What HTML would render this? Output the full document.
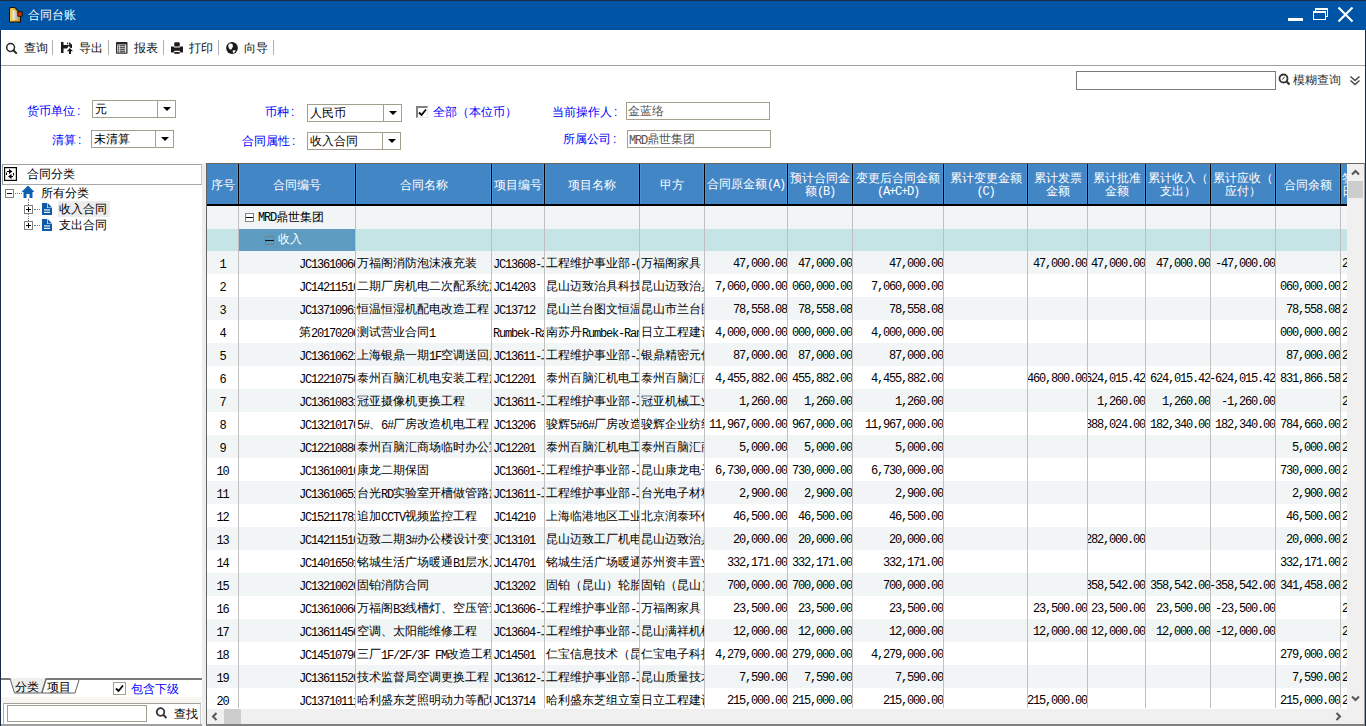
<!DOCTYPE html><html><head><meta charset='utf-8'><style>
*{margin:0;padding:0;box-sizing:border-box}
html,body{width:1366px;height:726px;overflow:hidden;background:#fff;font-family:'Liberation Sans',sans-serif;font-size:12px;color:#000}
.ab{position:absolute}
.t{position:absolute;white-space:nowrap;line-height:14px;font-size:12px}
.m{font-family:'Liberation Mono',monospace;letter-spacing:-1.2px}
.lbl{color:#0000ff}
.combo{position:absolute;border:1px solid #a49e8c;background:#fff}
.combo .dv{position:absolute;top:0;bottom:0;width:1px;background:#a49e8c}
.arr{position:absolute;width:0;height:0;border-left:4px solid transparent;border-right:4px solid transparent;border-top:4px solid #000}
.hd{position:absolute;top:164px;height:40px;padding-top:2px;background:#4386c6;color:#fff;display:flex;align-items:center;justify-content:center;text-align:center;line-height:13px;overflow:hidden;white-space:nowrap}
.cell{position:absolute;height:23px;overflow:hidden;white-space:nowrap;line-height:23px}
</style></head><body>
<div class='ab' style='left:0;top:0;width:1366px;height:1px;background:#1b2b44'></div>
<div class='ab' style='left:0;top:1px;width:1366px;height:29px;background:#0054a5'></div>
<div class='ab' style='left:0;top:30px;width:1px;height:696px;background:#1b2b44'></div>
<div class='ab' style='left:1365px;top:30px;width:1px;height:696px;background:#1b2b44'></div>
<svg class='ab' style='left:8px;top:6px' width='16' height='18' viewBox='0 0 16 18'>
<defs><linearGradient id='gy' x1='0' x2='1'><stop offset='0' stop-color='#f8d048'/><stop offset='1' stop-color='#c89010'/></linearGradient>
<linearGradient id='gp' x1='0' x2='1'><stop offset='0' stop-color='#f4f2ea'/><stop offset='1' stop-color='#a8a498'/></linearGradient></defs>
<path d='M1 3 Q1 1 3 1 H7 L13 7.5 V16.5 H1 Z' fill='#1a1200'/>
<path d='M2 3.2 Q2 2 3.2 2 H6.6 L12 7.9 V15.5 H2 Z' fill='url(#gy)'/>
<path d='M4.5 4 H6.4 L10.5 8.5 V14 H4.5 Z' fill='url(#gp)'/>
<rect x='9.3' y='5.3' width='5.4' height='5.4' rx='1' fill='#1a1200'/>
<rect x='10' y='6' width='4' height='4' rx='1.5' fill='#c42a06'/>
</svg>
<div class='t' style='left:28px;top:8px;color:#fff'>合同台账</div>
<div class='ab' style='left:1288px;top:18px;width:15px;height:3px;background:#fff'></div>
<div class='ab' style='left:1315px;top:8px;width:13px;height:9px;border:1px solid #fff;border-top-width:2px'></div>
<div class='ab' style='left:1313px;top:11px;width:13px;height:9px;border:1px solid #fff;border-top-width:2px;background:#0054a5'></div>
<svg class='ab' style='left:1336px;top:5px' width='19' height='19' viewBox='0 0 19 19'><path d='M2.5 2.5 L16.5 16.5 M16.5 2.5 L2.5 16.5' stroke='#fff' stroke-width='2.2'/></svg>
<div class='ab' style='left:1px;top:65px;width:1364px;height:1px;background:#a0a0a0'></div>
<div class='t' style='left:24px;top:41px;color:#111'>查询</div>
<div class='ab' style='left:52px;top:40px;width:1px;height:15px;background:#b0b0b0'></div>
<div class='t' style='left:79px;top:41px;color:#111'>导出</div>
<div class='ab' style='left:108px;top:40px;width:1px;height:15px;background:#b0b0b0'></div>
<div class='t' style='left:134px;top:41px;color:#111'>报表</div>
<div class='ab' style='left:163px;top:40px;width:1px;height:15px;background:#b0b0b0'></div>
<div class='t' style='left:189px;top:41px;color:#111'>打印</div>
<div class='ab' style='left:218px;top:40px;width:1px;height:15px;background:#b0b0b0'></div>
<div class='t' style='left:244px;top:41px;color:#111'>向导</div>
<div class='ab' style='left:273px;top:40px;width:1px;height:15px;background:#b0b0b0'></div>
<svg class='ab' style='left:5px;top:42px' width='13' height='13' viewBox='0 0 13 13'><circle cx='5.6' cy='5.5' r='3.9' fill='none' stroke='#222' stroke-width='1.5'/><path d='M8.4 8.3 L11.2 11.1' stroke='#222' stroke-width='2' stroke-linecap='round'/></svg>
<svg class='ab' style='left:61px;top:42px' width='12' height='13' viewBox='0 0 12 13'><path d='M0 0 H2.5 V3 H8.3 L6 6.5 H2.5 V11 H0 Z' fill='#1a1a1a'/><path d='M8 0 L11 2.7 V6 L9.6 6 L8.2 4.2 Z' fill='#1a1a1a'/><rect x='6' y='0.6' width='1.2' height='1.6' fill='#1a1a1a'/><path d='M5.8 9.2 L8.9 6 L12 9.2 H10 V12 H8 V9.2 Z' fill='#1a1a1a'/></svg>
<svg class='ab' style='left:116px;top:42px' width='12' height='12' viewBox='0 0 12 12'><rect x='0' y='0' width='11.5' height='11.8' rx='0.8' fill='#2a2626'/><rect x='1.2' y='2.4' width='9.1' height='8.3' fill='#dcdcdc'/><g fill='#3a3a3a'><rect x='2' y='3.2' width='1.2' height='1.2'/><rect x='2' y='5.2' width='1.2' height='1.2'/><rect x='2' y='7.2' width='1.2' height='1.2'/><rect x='2' y='9.2' width='1.2' height='1.2'/><rect x='4' y='3.2' width='5' height='1.1'/><rect x='4' y='5.2' width='5' height='1.1'/><rect x='4' y='7.2' width='5' height='1.1'/><rect x='4' y='9.2' width='5' height='1.1'/></g></svg>
<svg class='ab' style='left:171px;top:42px' width='12' height='12' viewBox='0 0 12 12'><path d='M3.3 4.4 V1.2 Q3.3 0.2 4.3 0.2 H7.7 Q8.7 0.2 8.7 1.2 V4.4 Z' fill='#1e1a1a'/><path d='M0 4.6 H2.5 L3.3 5.6 H8.7 L9.5 4.6 H12 V10.4 H9.5 L8.5 8.8 H3.5 L2.5 10.4 H0 Z' fill='#1e1a1a'/><rect x='3.3' y='10' width='5.4' height='1.8' fill='#1e1a1a'/></svg>
<svg class='ab' style='left:226px;top:42px' width='12' height='12' viewBox='0 0 12 12'><circle cx='6' cy='6' r='5.9' fill='#1e1a1a'/><path d='M3.2 1.8 Q5.5 1 6.8 2.4 Q6.2 4 7.2 4.3 Q5.8 6 5.4 7.5 Q3.8 7.8 3 6.6 Q2.4 5 2.2 3.2 Z' fill='#fff'/><path d='M6.6 8.6 Q8.2 7.9 9.8 8.6 Q8.8 10.6 7.4 11.2 Q6.6 10 6.6 8.6 Z' fill='#fff'/></svg>
<div class='ab' style='left:1076px;top:71px;width:200px;height:19px;border:1px solid #7a7a7a;background:#fff'></div>
<svg class='ab' style='left:1278px;top:73px' width='13' height='13' viewBox='0 0 13 13'><circle cx='5.5' cy='5.5' r='4' fill='none' stroke='#333' stroke-width='1.8'/><path d='M4.5 6.5 L6.5 4' stroke='#333' stroke-width='1'/><path d='M8.3 8.3 L11.5 11.5' stroke='#333' stroke-width='2.2'/></svg>
<div class='t' style='left:1293px;top:73px;color:#333'>模糊查询</div>
<svg class='ab' style='left:1349px;top:75px' width='12' height='12' viewBox='0 0 12 12'><path d='M1.5 1.5 L6 5.5 L10.5 1.5 M1.5 5.5 L6 9.5 L10.5 5.5' fill='none' stroke='#444' stroke-width='1.4'/></svg>
<div class='combo' style='left:92px;top:100px;width:84px;height:18px'><div class='dv' style='left:64px'></div></div>
<div class='t' style='left:95px;top:102px'>元</div>
<div class='arr' style='left:163px;top:107px'></div>
<div class='combo' style='left:91px;top:130px;width:83px;height:18px'><div class='dv' style='left:63px'></div></div>
<div class='t' style='left:94px;top:132px'>未清算</div>
<div class='arr' style='left:161px;top:137px'></div>
<div class='combo' style='left:307px;top:104px;width:95px;height:18px'><div class='dv' style='left:75px'></div></div>
<div class='t' style='left:310px;top:106px'>人民币</div>
<div class='arr' style='left:389px;top:111px'></div>
<div class='combo' style='left:307px;top:132px;width:94px;height:18px'><div class='dv' style='left:74px'></div></div>
<div class='t' style='left:310px;top:134px'>收入合同</div>
<div class='arr' style='left:388px;top:139px'></div>
<div class='t lbl' style='left:27px;top:104px'>货币单位<span style='margin-left:2px'>:</span></div>
<div class='t lbl' style='left:52px;top:133px'>清算<span style='margin-left:2px'>:</span></div>
<div class='t lbl' style='left:265px;top:105px'>币种<span style='margin-left:2px'>:</span></div>
<div class='t lbl' style='left:242px;top:134px'>合同属性<span style='margin-left:2px'>:</span></div>
<div class='ab' style='left:416px;top:106px;width:12px;height:12px;border-top:2px solid #808080;border-left:2px solid #808080;border-right:1px solid #e8e8e8;border-bottom:1px solid #e8e8e8;background:#fff'></div>
<svg class='ab' style='left:418px;top:108px' width='9' height='9' viewBox='0 0 9 9'><path d='M1 4.5 L3.5 7 L8 1.5' fill='none' stroke='#000' stroke-width='1.8'/></svg>
<div class='t lbl' style='left:433px;top:105px'>全部（本位币）</div>
<div class='t lbl' style='left:552px;top:105px'>当前操作人<span style='margin-left:2px'>:</span></div>
<div class='t lbl' style='left:563px;top:132px'>所属公司<span style='margin-left:2px'>:</span></div>
<div class='combo' style='left:626px;top:102px;width:144px;height:18px'></div>
<div class='t' style='left:628px;top:104px;color:#555'>金蓝络</div>
<div class='combo' style='left:627px;top:130px;width:144px;height:18px'></div>
<div class='t' style='left:629px;top:132px;color:#555'><span class='m' style='position:relative;top:1px'>MRD</span>鼎世集团</div>
<div class='ab' style='left:2px;top:164px;width:200px;height:21px;border:1px solid #a0a0a0;border-right-color:#c8c8c8;border-bottom-color:#a8a8a8'></div>
<svg class='ab' style='left:4px;top:167px' width='13' height='14' viewBox='0 0 13 14'><rect x='0.6' y='0.6' width='11.8' height='12.8' fill='#fff' stroke='#000' stroke-width='1.2'/><path d='M2.5 8 V5.5 M3 4.5 H6' stroke='#000' stroke-width='1' fill='none'/><path d='M5 2 L8.5 4.5 L5 7 Z' fill='#000'/><path d='M9.5 6 V8.5 M9 9.5 H6.5' stroke='#000' stroke-width='1' fill='none'/><path d='M7.5 7 L4 9.5 L7.5 12 Z' fill='#000'/></svg>
<div class='t' style='left:27px;top:167px'>合同分类</div>
<div class='ab' style='left:5px;top:189px;width:9px;height:9px;border:1px solid #808080;background:#fff'></div><div class='ab' style='left:7px;top:193px;width:5px;height:1px;background:#000'></div>
<div class='ab' style='left:15px;top:193px;width:7px;height:1px;border-top:1px dotted #808080'></div>
<svg class='ab' style='left:21px;top:185px' width='14' height='14' viewBox='0 0 14 14'><path d='M7 0.5 L13.5 7 H11.5 V13 H8.5 V9 H5.5 V13 H2.5 V7 H0.5 Z' fill='#1060b0'/></svg>
<div class='t' style='left:41px;top:186px'>所有分类</div>
<div class='ab' style='left:28px;top:199px;width:1px;height:22px;border-left:1px dotted #808080'></div>
<div class='ab' style='left:24px;top:205px;width:9px;height:9px;border:1px solid #808080;background:#fff'></div><div class='ab' style='left:26px;top:209px;width:5px;height:1px;background:#000'></div><div class='ab' style='left:28px;top:207px;width:1px;height:5px;background:#000'></div>
<div class='ab' style='left:34px;top:209px;width:6px;height:1px;border-top:1px dotted #808080'></div>
<svg class='ab' style='left:42px;top:203px' width='10' height='12' viewBox='0 0 10 12'><path d='M0 0 H5 V5 H10 V12 H0 Z' fill='#0d5aa8'/><path d='M5.6 0 L10 4.4 H5.6 Z' fill='#0d5aa8'/><rect x='2' y='6.4' width='6' height='1.1' fill='#fff'/><rect x='2' y='8.8' width='6' height='1.1' fill='#fff'/></svg>
<div class='ab' style='left:58px;top:201px;width:52px;height:16px;background:#ececec'></div>
<div class='t' style='left:59px;top:202px'>收入合同</div>
<div class='ab' style='left:24px;top:221px;width:9px;height:9px;border:1px solid #808080;background:#fff'></div><div class='ab' style='left:26px;top:225px;width:5px;height:1px;background:#000'></div><div class='ab' style='left:28px;top:223px;width:1px;height:5px;background:#000'></div>
<div class='ab' style='left:34px;top:225px;width:6px;height:1px;border-top:1px dotted #808080'></div>
<svg class='ab' style='left:42px;top:219px' width='10' height='12' viewBox='0 0 10 12'><path d='M0 0 H5 V5 H10 V12 H0 Z' fill='#0d5aa8'/><path d='M5.6 0 L10 4.4 H5.6 Z' fill='#0d5aa8'/><rect x='2' y='6.4' width='6' height='1.1' fill='#fff'/><rect x='2' y='8.8' width='6' height='1.1' fill='#fff'/></svg>
<div class='t' style='left:59px;top:218px'>支出合同</div>
<div class='ab' style='left:1px;top:678px;width:201px;height:2px;background:#7a7a7a'></div>
<svg class='ab' style='left:5px;top:677px' width='80' height='18' viewBox='0 0 80 18'>
<path d='M5 1 L9.5 16 H36.5 L41 1 Z' fill='#efefef'/><path d='M5 1.5 L9.5 16 H36.5 L41 1.5' fill='none' stroke='#606060' stroke-width='1'/>
<path d='M41 3 L37 16 H70 L74 3' fill='#fff' stroke='#606060' stroke-width='1'/></svg>
<div class='t' style='left:15px;top:680px'>分类</div>
<div class='t' style='left:47px;top:680px'>项目</div>
<div class='ab' style='left:113px;top:682px;width:13px;height:13px;border:1px solid #a49e8c;background:#fff'></div>
<svg class='ab' style='left:115px;top:684px' width='9' height='9' viewBox='0 0 9 9'><path d='M1 4.5 L3.5 7 L8 1.5' fill='none' stroke='#000' stroke-width='1.8'/></svg>
<div class='t lbl' style='left:131px;top:682px'>包含下级</div>
<div class='ab' style='left:1px;top:697px;width:201px;height:6px;background:#f7f5f0'></div>
<div class='ab' style='left:3px;top:703px;width:198px;height:23px;border-top:1px solid #a0a0a0;border-left:1px solid #b0b0b0;border-right:1px solid #c8c8c8'></div>
<div class='ab' style='left:7px;top:705px;width:140px;height:17px;border:1px solid #a49e8c;background:#fff'></div>
<svg class='ab' style='left:155px;top:706px' width='13' height='14' viewBox='0 0 13 14'><circle cx='5.5' cy='6' r='3.8' fill='none' stroke='#333' stroke-width='1.8'/><path d='M8.2 8.7 L11.5 12' stroke='#333' stroke-width='2'/></svg>
<div class='t' style='left:174px;top:707px'>查找</div>
<div class='ab' style='left:1px;top:724px;width:201px;height:2px;background:#a0a0a0'></div>
<div class='ab' style='left:202px;top:163px;width:4px;height:563px;background:#eeeeee'></div>
<div class='ab' style='left:206px;top:163px;width:1159px;height:1px;background:#6b6662'></div>
<div class='ab' style='left:206px;top:163px;width:1px;height:563px;background:#646464'></div>
<div class='ab' style='left:1364px;top:163px;width:1px;height:563px;background:#a0a0a0'></div>
<div class='ab' style='left:206px;top:724px;width:1159px;height:2px;background:#808080'></div>
<div class='hd' style='left:207px;width:31px;justify-content:center;'><div>序号</div></div>
<div class='hd' style='left:239px;width:116px;justify-content:center;'><div>合同编号</div></div>
<div class='ab' style='left:237px;top:164px;width:3px;height:40px;background:#4a94da'></div>
<div class='ab' style='left:238px;top:164px;width:1px;height:40px;background:#000'></div>
<div class='hd' style='left:356px;width:135px;justify-content:center;'><div>合同名称</div></div>
<div class='ab' style='left:354px;top:164px;width:3px;height:40px;background:#4a94da'></div>
<div class='ab' style='left:355px;top:164px;width:1px;height:40px;background:#000'></div>
<div class='hd' style='left:492px;width:52px;justify-content:center;'><div>项目编号</div></div>
<div class='ab' style='left:490px;top:164px;width:3px;height:40px;background:#4a94da'></div>
<div class='ab' style='left:491px;top:164px;width:1px;height:40px;background:#000'></div>
<div class='hd' style='left:545px;width:94px;justify-content:center;'><div>项目名称</div></div>
<div class='ab' style='left:543px;top:164px;width:3px;height:40px;background:#4a94da'></div>
<div class='ab' style='left:544px;top:164px;width:1px;height:40px;background:#000'></div>
<div class='hd' style='left:640px;width:64px;justify-content:center;'><div>甲方</div></div>
<div class='ab' style='left:638px;top:164px;width:3px;height:40px;background:#4a94da'></div>
<div class='ab' style='left:639px;top:164px;width:1px;height:40px;background:#000'></div>
<div class='hd' style='left:705px;width:82px;justify-content:center;'><div>合同原金额<span class='m'>(A)</span></div></div>
<div class='ab' style='left:703px;top:164px;width:3px;height:40px;background:#4a94da'></div>
<div class='ab' style='left:704px;top:164px;width:1px;height:40px;background:#000'></div>
<div class='hd' style='left:788px;width:64px;justify-content:center;'><div>预计合同金<br>额<span class='m'>(B)</span></div></div>
<div class='ab' style='left:786px;top:164px;width:3px;height:40px;background:#4a94da'></div>
<div class='ab' style='left:787px;top:164px;width:1px;height:40px;background:#000'></div>
<div class='hd' style='left:853px;width:90px;justify-content:center;'><div>变更后合同金额<br><span class='m'>(A+C+D)</span></div></div>
<div class='ab' style='left:851px;top:164px;width:3px;height:40px;background:#4a94da'></div>
<div class='ab' style='left:852px;top:164px;width:1px;height:40px;background:#000'></div>
<div class='hd' style='left:944px;width:83px;justify-content:center;'><div>累计变更金额<br><span class='m'>(C)</span></div></div>
<div class='ab' style='left:942px;top:164px;width:3px;height:40px;background:#4a94da'></div>
<div class='ab' style='left:943px;top:164px;width:1px;height:40px;background:#000'></div>
<div class='hd' style='left:1028px;width:59px;justify-content:center;'><div>累计发票<br>金额</div></div>
<div class='ab' style='left:1026px;top:164px;width:3px;height:40px;background:#4a94da'></div>
<div class='ab' style='left:1027px;top:164px;width:1px;height:40px;background:#000'></div>
<div class='hd' style='left:1088px;width:57px;justify-content:center;'><div>累计批准<br>金额</div></div>
<div class='ab' style='left:1086px;top:164px;width:3px;height:40px;background:#4a94da'></div>
<div class='ab' style='left:1087px;top:164px;width:1px;height:40px;background:#000'></div>
<div class='hd' style='left:1146px;width:64px;justify-content:center;'><div>累计收入（<br>支出）</div></div>
<div class='ab' style='left:1144px;top:164px;width:3px;height:40px;background:#4a94da'></div>
<div class='ab' style='left:1145px;top:164px;width:1px;height:40px;background:#000'></div>
<div class='hd' style='left:1211px;width:64px;justify-content:center;'><div>累计应收（<br>应付）</div></div>
<div class='ab' style='left:1209px;top:164px;width:3px;height:40px;background:#4a94da'></div>
<div class='ab' style='left:1210px;top:164px;width:1px;height:40px;background:#000'></div>
<div class='hd' style='left:1276px;width:64px;justify-content:center;'><div>合同余额</div></div>
<div class='ab' style='left:1274px;top:164px;width:3px;height:40px;background:#4a94da'></div>
<div class='ab' style='left:1275px;top:164px;width:1px;height:40px;background:#000'></div>
<div class='hd' style='left:1341px;width:6px;justify-content:flex-start;padding-left:1px;'><div>签订<br>日期</div></div>
<div class='ab' style='left:1339px;top:164px;width:3px;height:40px;background:#4a94da'></div>
<div class='ab' style='left:1340px;top:164px;width:1px;height:40px;background:#000'></div>
<div class='ab' style='left:1339px;top:164px;width:3px;height:40px;background:#4a94da'></div><div class='ab' style='left:1340px;top:164px;width:1px;height:40px;background:#000'></div>
<div class='ab' style='left:207px;top:204px;width:1140px;height:2px;background:#000'></div>
<div class='ab' style='left:207px;top:206px;width:1140px;height:23px;background:#f1f5f6'></div>
<div class='ab' style='left:207px;top:229px;width:1140px;height:22px;background:#c4e4e5'></div>
<div class='ab' style='left:239px;top:229px;width:116px;height:22px;background:#5d9bc0'></div>
<div class='ab' style='left:207px;top:251px;width:1140px;height:23px;background:#f1f5f6'></div>
<div class='ab' style='left:207px;top:274px;width:1140px;height:23px;background:#ffffff'></div>
<div class='ab' style='left:207px;top:297px;width:1140px;height:23px;background:#f1f5f6'></div>
<div class='ab' style='left:207px;top:320px;width:1140px;height:23px;background:#ffffff'></div>
<div class='ab' style='left:207px;top:343px;width:1140px;height:23px;background:#f1f5f6'></div>
<div class='ab' style='left:207px;top:366px;width:1140px;height:23px;background:#ffffff'></div>
<div class='ab' style='left:207px;top:389px;width:1140px;height:23px;background:#f1f5f6'></div>
<div class='ab' style='left:207px;top:412px;width:1140px;height:23px;background:#ffffff'></div>
<div class='ab' style='left:207px;top:435px;width:1140px;height:23px;background:#f1f5f6'></div>
<div class='ab' style='left:207px;top:458px;width:1140px;height:23px;background:#ffffff'></div>
<div class='ab' style='left:207px;top:481px;width:1140px;height:23px;background:#f1f5f6'></div>
<div class='ab' style='left:207px;top:504px;width:1140px;height:23px;background:#ffffff'></div>
<div class='ab' style='left:207px;top:527px;width:1140px;height:23px;background:#f1f5f6'></div>
<div class='ab' style='left:207px;top:550px;width:1140px;height:23px;background:#ffffff'></div>
<div class='ab' style='left:207px;top:573px;width:1140px;height:23px;background:#f1f5f6'></div>
<div class='ab' style='left:207px;top:596px;width:1140px;height:23px;background:#ffffff'></div>
<div class='ab' style='left:207px;top:619px;width:1140px;height:23px;background:#f1f5f6'></div>
<div class='ab' style='left:207px;top:642px;width:1140px;height:23px;background:#ffffff'></div>
<div class='ab' style='left:207px;top:665px;width:1140px;height:23px;background:#f1f5f6'></div>
<div class='ab' style='left:207px;top:688px;width:1140px;height:23px;background:#ffffff'></div>
<div class='ab' style='left:238px;top:206px;width:1px;height:502px;background:#c0c0c0'></div>
<div class='ab' style='left:355px;top:206px;width:1px;height:502px;background:#c0c0c0'></div>
<div class='ab' style='left:491px;top:206px;width:1px;height:502px;background:#c0c0c0'></div>
<div class='ab' style='left:544px;top:206px;width:1px;height:502px;background:#c0c0c0'></div>
<div class='ab' style='left:639px;top:206px;width:1px;height:502px;background:#c0c0c0'></div>
<div class='ab' style='left:704px;top:206px;width:1px;height:502px;background:#c0c0c0'></div>
<div class='ab' style='left:787px;top:206px;width:1px;height:502px;background:#c0c0c0'></div>
<div class='ab' style='left:852px;top:206px;width:1px;height:502px;background:#c0c0c0'></div>
<div class='ab' style='left:943px;top:206px;width:1px;height:502px;background:#c0c0c0'></div>
<div class='ab' style='left:1027px;top:206px;width:1px;height:502px;background:#c0c0c0'></div>
<div class='ab' style='left:1087px;top:206px;width:1px;height:502px;background:#c0c0c0'></div>
<div class='ab' style='left:1145px;top:206px;width:1px;height:502px;background:#c0c0c0'></div>
<div class='ab' style='left:1210px;top:206px;width:1px;height:502px;background:#c0c0c0'></div>
<div class='ab' style='left:1275px;top:206px;width:1px;height:502px;background:#c0c0c0'></div>
<div class='ab' style='left:1340px;top:206px;width:1px;height:502px;background:#c0c0c0'></div>
<div class='ab' style='left:245px;top:213px;width:9px;height:9px;border:1px solid #808080;background:#fff'></div><div class='ab' style='left:246px;top:217px;width:7px;height:1px;background:#000'></div>
<div class='t' style='left:258px;top:210px'><span class='m'>MRD</span>鼎世集团</div>
<div class='ab' style='left:265px;top:236px;width:9px;height:9px;border:1px solid #808080'></div><div class='ab' style='left:265px;top:240px;width:9px;height:1px;background:#111'></div>
<div class='t' style='left:278px;top:232px;color:#fff'>收入</div>
<div class='cell' style='left:207px;top:251px;width:31px;text-align:center'><span class='m' style='position:relative;top:2px'>1</span></div>
<div class='cell' style='left:239px;top:251px;width:116px'><span style='position:absolute;left:60px;top:1px'><span class='m' style='position:relative;top:1px'>JC1361006011</span></span></div>
<div class='cell' style='left:356px;top:251px;width:135px'><span style='position:absolute;left:1px;top:1px'>万福阁消防泡沫液充装</span></div>
<div class='cell' style='left:492px;top:251px;width:52px'><span style='position:absolute;left:1px;top:1px'><span class='m' style='position:relative;top:1px'>JC13608-</span>工</span></div>
<div class='cell' style='left:545px;top:251px;width:94px'><span style='position:absolute;left:1px;top:1px'>工程维护事业部<span class='m' style='position:relative;top:1px'>-</span>(</span></div>
<div class='cell' style='left:640px;top:251px;width:64px'><span style='position:absolute;left:1px;top:1px'>万福阁家具</span></div>
<div class='cell' style='left:705px;top:251px;width:82px'><span class='m' style='position:absolute;right:0;top:2px'>47,000.00</span></div>
<div class='cell' style='left:788px;top:251px;width:64px'><span class='m' style='position:absolute;right:0;top:2px'>47,000.00</span></div>
<div class='cell' style='left:853px;top:251px;width:90px'><span class='m' style='position:absolute;right:0;top:2px'>47,000.00</span></div>
<div class='cell' style='left:1028px;top:251px;width:59px'><span class='m' style='position:absolute;right:0;top:2px'>47,000.00</span></div>
<div class='cell' style='left:1088px;top:251px;width:57px'><span class='m' style='position:absolute;right:0;top:2px'>47,000.00</span></div>
<div class='cell' style='left:1146px;top:251px;width:64px'><span class='m' style='position:absolute;right:0;top:2px'>47,000.00</span></div>
<div class='cell' style='left:1211px;top:251px;width:64px'><span class='m' style='position:absolute;right:0;top:2px'>-47,000.00</span></div>
<div class='cell' style='left:1341px;top:251px;width:6px'><span class='m' style='position:absolute;left:1px;top:2px'>2017</span></div>
<div class='cell' style='left:207px;top:274px;width:31px;text-align:center'><span class='m' style='position:relative;top:2px'>2</span></div>
<div class='cell' style='left:239px;top:274px;width:116px'><span style='position:absolute;left:60px;top:1px'><span class='m' style='position:relative;top:1px'>JC1421151011</span></span></div>
<div class='cell' style='left:356px;top:274px;width:135px'><span style='position:absolute;left:1px;top:1px'>二期厂房机电二次配系统施工</span></div>
<div class='cell' style='left:492px;top:274px;width:52px'><span style='position:absolute;left:1px;top:1px'><span class='m' style='position:relative;top:1px'>JC14203</span></span></div>
<div class='cell' style='left:545px;top:274px;width:94px'><span style='position:absolute;left:1px;top:1px'>昆山迈致治具科技</span></div>
<div class='cell' style='left:640px;top:274px;width:64px'><span style='position:absolute;left:1px;top:1px'>昆山迈致治具</span></div>
<div class='cell' style='left:705px;top:274px;width:82px'><span class='m' style='position:absolute;right:0;top:2px'>7,060,000.00</span></div>
<div class='cell' style='left:788px;top:274px;width:64px'><span class='m' style='position:absolute;right:0;top:2px'>060,000.00</span></div>
<div class='cell' style='left:853px;top:274px;width:90px'><span class='m' style='position:absolute;right:0;top:2px'>7,060,000.00</span></div>
<div class='cell' style='left:1276px;top:274px;width:64px'><span class='m' style='position:absolute;right:0;top:2px'>060,000.00</span></div>
<div class='cell' style='left:1341px;top:274px;width:6px'><span class='m' style='position:absolute;left:1px;top:2px'>2017</span></div>
<div class='cell' style='left:207px;top:297px;width:31px;text-align:center'><span class='m' style='position:relative;top:2px'>3</span></div>
<div class='cell' style='left:239px;top:297px;width:116px'><span style='position:absolute;left:60px;top:1px'><span class='m' style='position:relative;top:1px'>JC1371096111</span></span></div>
<div class='cell' style='left:356px;top:297px;width:135px'><span style='position:absolute;left:1px;top:1px'>恒温恒湿机配电改造工程</span></div>
<div class='cell' style='left:492px;top:297px;width:52px'><span style='position:absolute;left:1px;top:1px'><span class='m' style='position:relative;top:1px'>JC13712</span></span></div>
<div class='cell' style='left:545px;top:297px;width:94px'><span style='position:absolute;left:1px;top:1px'>昆山兰台图文恒温</span></div>
<div class='cell' style='left:640px;top:297px;width:64px'><span style='position:absolute;left:1px;top:1px'>昆山市兰台图</span></div>
<div class='cell' style='left:705px;top:297px;width:82px'><span class='m' style='position:absolute;right:0;top:2px'>78,558.08</span></div>
<div class='cell' style='left:788px;top:297px;width:64px'><span class='m' style='position:absolute;right:0;top:2px'>78,558.08</span></div>
<div class='cell' style='left:853px;top:297px;width:90px'><span class='m' style='position:absolute;right:0;top:2px'>78,558.08</span></div>
<div class='cell' style='left:1276px;top:297px;width:64px'><span class='m' style='position:absolute;right:0;top:2px'>78,558.08</span></div>
<div class='cell' style='left:1341px;top:297px;width:6px'><span class='m' style='position:absolute;left:1px;top:2px'>2017</span></div>
<div class='cell' style='left:207px;top:320px;width:31px;text-align:center'><span class='m' style='position:relative;top:2px'>4</span></div>
<div class='cell' style='left:239px;top:320px;width:116px'><span style='position:absolute;left:60px;top:1px'>第<span class='m' style='position:relative;top:1px'>2017020011</span></span></div>
<div class='cell' style='left:356px;top:320px;width:135px'><span style='position:absolute;left:1px;top:1px'>测试营业合同<span class='m' style='position:relative;top:1px'>1</span></span></div>
<div class='cell' style='left:492px;top:320px;width:52px'><span style='position:absolute;left:1px;top:1px'><span class='m' style='position:relative;top:1px'>Rumbek-Ran</span></span></div>
<div class='cell' style='left:545px;top:320px;width:94px'><span style='position:absolute;left:1px;top:1px'>南苏丹<span class='m' style='position:relative;top:1px'>Rumbek-Ran</span></span></div>
<div class='cell' style='left:640px;top:320px;width:64px'><span style='position:absolute;left:1px;top:1px'>日立工程建设</span></div>
<div class='cell' style='left:705px;top:320px;width:82px'><span class='m' style='position:absolute;right:0;top:2px'>4,000,000.00</span></div>
<div class='cell' style='left:788px;top:320px;width:64px'><span class='m' style='position:absolute;right:0;top:2px'>000,000.00</span></div>
<div class='cell' style='left:853px;top:320px;width:90px'><span class='m' style='position:absolute;right:0;top:2px'>4,000,000.00</span></div>
<div class='cell' style='left:1276px;top:320px;width:64px'><span class='m' style='position:absolute;right:0;top:2px'>000,000.00</span></div>
<div class='cell' style='left:1341px;top:320px;width:6px'><span class='m' style='position:absolute;left:1px;top:2px'>2017</span></div>
<div class='cell' style='left:207px;top:343px;width:31px;text-align:center'><span class='m' style='position:relative;top:2px'>5</span></div>
<div class='cell' style='left:239px;top:343px;width:116px'><span style='position:absolute;left:60px;top:1px'><span class='m' style='position:relative;top:1px'>JC1361062111</span></span></div>
<div class='cell' style='left:356px;top:343px;width:135px'><span style='position:absolute;left:1px;top:1px'>上海银鼎一期<span class='m' style='position:relative;top:1px'>1F</span>空调送回风</span></div>
<div class='cell' style='left:492px;top:343px;width:52px'><span style='position:absolute;left:1px;top:1px'><span class='m' style='position:relative;top:1px'>JC13611-</span>工</span></div>
<div class='cell' style='left:545px;top:343px;width:94px'><span style='position:absolute;left:1px;top:1px'>工程维护事业部<span class='m' style='position:relative;top:1px'>-</span>工</span></div>
<div class='cell' style='left:640px;top:343px;width:64px'><span style='position:absolute;left:1px;top:1px'>银鼎精密元件</span></div>
<div class='cell' style='left:705px;top:343px;width:82px'><span class='m' style='position:absolute;right:0;top:2px'>87,000.00</span></div>
<div class='cell' style='left:788px;top:343px;width:64px'><span class='m' style='position:absolute;right:0;top:2px'>87,000.00</span></div>
<div class='cell' style='left:853px;top:343px;width:90px'><span class='m' style='position:absolute;right:0;top:2px'>87,000.00</span></div>
<div class='cell' style='left:1276px;top:343px;width:64px'><span class='m' style='position:absolute;right:0;top:2px'>87,000.00</span></div>
<div class='cell' style='left:1341px;top:343px;width:6px'><span class='m' style='position:absolute;left:1px;top:2px'>2017</span></div>
<div class='cell' style='left:207px;top:366px;width:31px;text-align:center'><span class='m' style='position:relative;top:2px'>6</span></div>
<div class='cell' style='left:239px;top:366px;width:116px'><span style='position:absolute;left:60px;top:1px'><span class='m' style='position:relative;top:1px'>JC1221075011</span></span></div>
<div class='cell' style='left:356px;top:366px;width:135px'><span style='position:absolute;left:1px;top:1px'>泰州百脑汇机电安装工程施工</span></div>
<div class='cell' style='left:492px;top:366px;width:52px'><span style='position:absolute;left:1px;top:1px'><span class='m' style='position:relative;top:1px'>JC12201</span></span></div>
<div class='cell' style='left:545px;top:366px;width:94px'><span style='position:absolute;left:1px;top:1px'>泰州百脑汇机电工程</span></div>
<div class='cell' style='left:640px;top:366px;width:64px'><span style='position:absolute;left:1px;top:1px'>泰州百脑汇商</span></div>
<div class='cell' style='left:705px;top:366px;width:82px'><span class='m' style='position:absolute;right:0;top:2px'>4,455,882.00</span></div>
<div class='cell' style='left:788px;top:366px;width:64px'><span class='m' style='position:absolute;right:0;top:2px'>455,882.00</span></div>
<div class='cell' style='left:853px;top:366px;width:90px'><span class='m' style='position:absolute;right:0;top:2px'>4,455,882.00</span></div>
<div class='cell' style='left:1028px;top:366px;width:59px'><span class='m' style='position:absolute;right:0;top:2px'>1,460,800.00</span></div>
<div class='cell' style='left:1088px;top:366px;width:57px'><span class='m' style='position:absolute;right:0;top:2px'>624,015.42</span></div>
<div class='cell' style='left:1146px;top:366px;width:64px'><span class='m' style='position:absolute;right:0;top:2px'>624,015.42</span></div>
<div class='cell' style='left:1211px;top:366px;width:64px'><span class='m' style='position:absolute;right:0;top:2px'>-624,015.42</span></div>
<div class='cell' style='left:1276px;top:366px;width:64px'><span class='m' style='position:absolute;right:0;top:2px'>831,866.58</span></div>
<div class='cell' style='left:1341px;top:366px;width:6px'><span class='m' style='position:absolute;left:1px;top:2px'>2017</span></div>
<div class='cell' style='left:207px;top:389px;width:31px;text-align:center'><span class='m' style='position:relative;top:2px'>7</span></div>
<div class='cell' style='left:239px;top:389px;width:116px'><span style='position:absolute;left:60px;top:1px'><span class='m' style='position:relative;top:1px'>JC1361083111</span></span></div>
<div class='cell' style='left:356px;top:389px;width:135px'><span style='position:absolute;left:1px;top:1px'>冠亚摄像机更换工程</span></div>
<div class='cell' style='left:492px;top:389px;width:52px'><span style='position:absolute;left:1px;top:1px'><span class='m' style='position:relative;top:1px'>JC13611-</span>工</span></div>
<div class='cell' style='left:545px;top:389px;width:94px'><span style='position:absolute;left:1px;top:1px'>工程维护事业部<span class='m' style='position:relative;top:1px'>-</span>工</span></div>
<div class='cell' style='left:640px;top:389px;width:64px'><span style='position:absolute;left:1px;top:1px'>冠亚机械工业</span></div>
<div class='cell' style='left:705px;top:389px;width:82px'><span class='m' style='position:absolute;right:0;top:2px'>1,260.00</span></div>
<div class='cell' style='left:788px;top:389px;width:64px'><span class='m' style='position:absolute;right:0;top:2px'>1,260.00</span></div>
<div class='cell' style='left:853px;top:389px;width:90px'><span class='m' style='position:absolute;right:0;top:2px'>1,260.00</span></div>
<div class='cell' style='left:1088px;top:389px;width:57px'><span class='m' style='position:absolute;right:0;top:2px'>1,260.00</span></div>
<div class='cell' style='left:1146px;top:389px;width:64px'><span class='m' style='position:absolute;right:0;top:2px'>1,260.00</span></div>
<div class='cell' style='left:1211px;top:389px;width:64px'><span class='m' style='position:absolute;right:0;top:2px'>-1,260.00</span></div>
<div class='cell' style='left:1341px;top:389px;width:6px'><span class='m' style='position:absolute;left:1px;top:2px'>2017</span></div>
<div class='cell' style='left:207px;top:412px;width:31px;text-align:center'><span class='m' style='position:relative;top:2px'>8</span></div>
<div class='cell' style='left:239px;top:412px;width:116px'><span style='position:absolute;left:60px;top:1px'><span class='m' style='position:relative;top:1px'>JC1321017011</span></span></div>
<div class='cell' style='left:356px;top:412px;width:135px'><span style='position:absolute;left:1px;top:1px'><span class='m' style='position:relative;top:1px'>5#</span>、<span class='m' style='position:relative;top:1px'>6#</span>厂房改造机电工程</span></div>
<div class='cell' style='left:492px;top:412px;width:52px'><span style='position:absolute;left:1px;top:1px'><span class='m' style='position:relative;top:1px'>JC13206</span></span></div>
<div class='cell' style='left:545px;top:412px;width:94px'><span style='position:absolute;left:1px;top:1px'>骏辉<span class='m' style='position:relative;top:1px'>5#6#</span>厂房改造</span></div>
<div class='cell' style='left:640px;top:412px;width:64px'><span style='position:absolute;left:1px;top:1px'>骏辉企业纺织</span></div>
<div class='cell' style='left:705px;top:412px;width:82px'><span class='m' style='position:absolute;right:0;top:2px'>11,967,000.00</span></div>
<div class='cell' style='left:788px;top:412px;width:64px'><span class='m' style='position:absolute;right:0;top:2px'>967,000.00</span></div>
<div class='cell' style='left:853px;top:412px;width:90px'><span class='m' style='position:absolute;right:0;top:2px'>11,967,000.00</span></div>
<div class='cell' style='left:1088px;top:412px;width:57px'><span class='m' style='position:absolute;right:0;top:2px'>9,388,024.00</span></div>
<div class='cell' style='left:1146px;top:412px;width:64px'><span class='m' style='position:absolute;right:0;top:2px'>182,340.00</span></div>
<div class='cell' style='left:1211px;top:412px;width:64px'><span class='m' style='position:absolute;right:0;top:2px'>182,340.00</span></div>
<div class='cell' style='left:1276px;top:412px;width:64px'><span class='m' style='position:absolute;right:0;top:2px'>784,660.00</span></div>
<div class='cell' style='left:1341px;top:412px;width:6px'><span class='m' style='position:absolute;left:1px;top:2px'>2017</span></div>
<div class='cell' style='left:207px;top:435px;width:31px;text-align:center'><span class='m' style='position:relative;top:2px'>9</span></div>
<div class='cell' style='left:239px;top:435px;width:116px'><span style='position:absolute;left:60px;top:1px'><span class='m' style='position:relative;top:1px'>JC1221088011</span></span></div>
<div class='cell' style='left:356px;top:435px;width:135px'><span style='position:absolute;left:1px;top:1px'>泰州百脑汇商场临时办公室</span></div>
<div class='cell' style='left:492px;top:435px;width:52px'><span style='position:absolute;left:1px;top:1px'><span class='m' style='position:relative;top:1px'>JC12201</span></span></div>
<div class='cell' style='left:545px;top:435px;width:94px'><span style='position:absolute;left:1px;top:1px'>泰州百脑汇机电工程</span></div>
<div class='cell' style='left:640px;top:435px;width:64px'><span style='position:absolute;left:1px;top:1px'>泰州百脑汇商</span></div>
<div class='cell' style='left:705px;top:435px;width:82px'><span class='m' style='position:absolute;right:0;top:2px'>5,000.00</span></div>
<div class='cell' style='left:788px;top:435px;width:64px'><span class='m' style='position:absolute;right:0;top:2px'>5,000.00</span></div>
<div class='cell' style='left:853px;top:435px;width:90px'><span class='m' style='position:absolute;right:0;top:2px'>5,000.00</span></div>
<div class='cell' style='left:1276px;top:435px;width:64px'><span class='m' style='position:absolute;right:0;top:2px'>5,000.00</span></div>
<div class='cell' style='left:1341px;top:435px;width:6px'><span class='m' style='position:absolute;left:1px;top:2px'>2017</span></div>
<div class='cell' style='left:207px;top:458px;width:31px;text-align:center'><span class='m' style='position:relative;top:2px'>10</span></div>
<div class='cell' style='left:239px;top:458px;width:116px'><span style='position:absolute;left:60px;top:1px'><span class='m' style='position:relative;top:1px'>JC1361001011</span></span></div>
<div class='cell' style='left:356px;top:458px;width:135px'><span style='position:absolute;left:1px;top:1px'>康龙二期保固</span></div>
<div class='cell' style='left:492px;top:458px;width:52px'><span style='position:absolute;left:1px;top:1px'><span class='m' style='position:relative;top:1px'>JC13601-</span>工</span></div>
<div class='cell' style='left:545px;top:458px;width:94px'><span style='position:absolute;left:1px;top:1px'>工程维护事业部<span class='m' style='position:relative;top:1px'>-</span>工</span></div>
<div class='cell' style='left:640px;top:458px;width:64px'><span style='position:absolute;left:1px;top:1px'>昆山康龙电子</span></div>
<div class='cell' style='left:705px;top:458px;width:82px'><span class='m' style='position:absolute;right:0;top:2px'>6,730,000.00</span></div>
<div class='cell' style='left:788px;top:458px;width:64px'><span class='m' style='position:absolute;right:0;top:2px'>730,000.00</span></div>
<div class='cell' style='left:853px;top:458px;width:90px'><span class='m' style='position:absolute;right:0;top:2px'>6,730,000.00</span></div>
<div class='cell' style='left:1276px;top:458px;width:64px'><span class='m' style='position:absolute;right:0;top:2px'>730,000.00</span></div>
<div class='cell' style='left:1341px;top:458px;width:6px'><span class='m' style='position:absolute;left:1px;top:2px'>2017</span></div>
<div class='cell' style='left:207px;top:481px;width:31px;text-align:center'><span class='m' style='position:relative;top:2px'>11</span></div>
<div class='cell' style='left:239px;top:481px;width:116px'><span style='position:absolute;left:60px;top:1px'><span class='m' style='position:relative;top:1px'>JC1361065111</span></span></div>
<div class='cell' style='left:356px;top:481px;width:135px'><span style='position:absolute;left:1px;top:1px'>台光<span class='m' style='position:relative;top:1px'>RD</span>实验室开槽做管路施工</span></div>
<div class='cell' style='left:492px;top:481px;width:52px'><span style='position:absolute;left:1px;top:1px'><span class='m' style='position:relative;top:1px'>JC13611-</span>工</span></div>
<div class='cell' style='left:545px;top:481px;width:94px'><span style='position:absolute;left:1px;top:1px'>工程维护事业部<span class='m' style='position:relative;top:1px'>-</span>工</span></div>
<div class='cell' style='left:640px;top:481px;width:64px'><span style='position:absolute;left:1px;top:1px'>台光电子材料</span></div>
<div class='cell' style='left:705px;top:481px;width:82px'><span class='m' style='position:absolute;right:0;top:2px'>2,900.00</span></div>
<div class='cell' style='left:788px;top:481px;width:64px'><span class='m' style='position:absolute;right:0;top:2px'>2,900.00</span></div>
<div class='cell' style='left:853px;top:481px;width:90px'><span class='m' style='position:absolute;right:0;top:2px'>2,900.00</span></div>
<div class='cell' style='left:1276px;top:481px;width:64px'><span class='m' style='position:absolute;right:0;top:2px'>2,900.00</span></div>
<div class='cell' style='left:1341px;top:481px;width:6px'><span class='m' style='position:absolute;left:1px;top:2px'>2017</span></div>
<div class='cell' style='left:207px;top:504px;width:31px;text-align:center'><span class='m' style='position:relative;top:2px'>12</span></div>
<div class='cell' style='left:239px;top:504px;width:116px'><span style='position:absolute;left:60px;top:1px'><span class='m' style='position:relative;top:1px'>JC1521178111</span></span></div>
<div class='cell' style='left:356px;top:504px;width:135px'><span style='position:absolute;left:1px;top:1px'>追加<span class='m' style='position:relative;top:1px'>CCTV</span>视频监控工程</span></div>
<div class='cell' style='left:492px;top:504px;width:52px'><span style='position:absolute;left:1px;top:1px'><span class='m' style='position:relative;top:1px'>JC14210</span></span></div>
<div class='cell' style='left:545px;top:504px;width:94px'><span style='position:absolute;left:1px;top:1px'>上海临港地区工业</span></div>
<div class='cell' style='left:640px;top:504px;width:64px'><span style='position:absolute;left:1px;top:1px'>北京润泰环保</span></div>
<div class='cell' style='left:705px;top:504px;width:82px'><span class='m' style='position:absolute;right:0;top:2px'>46,500.00</span></div>
<div class='cell' style='left:788px;top:504px;width:64px'><span class='m' style='position:absolute;right:0;top:2px'>46,500.00</span></div>
<div class='cell' style='left:853px;top:504px;width:90px'><span class='m' style='position:absolute;right:0;top:2px'>46,500.00</span></div>
<div class='cell' style='left:1276px;top:504px;width:64px'><span class='m' style='position:absolute;right:0;top:2px'>46,500.00</span></div>
<div class='cell' style='left:1341px;top:504px;width:6px'><span class='m' style='position:absolute;left:1px;top:2px'>2017</span></div>
<div class='cell' style='left:207px;top:527px;width:31px;text-align:center'><span class='m' style='position:relative;top:2px'>13</span></div>
<div class='cell' style='left:239px;top:527px;width:116px'><span style='position:absolute;left:60px;top:1px'><span class='m' style='position:relative;top:1px'>JC1421151011</span></span></div>
<div class='cell' style='left:356px;top:527px;width:135px'><span style='position:absolute;left:1px;top:1px'>迈致二期<span class='m' style='position:relative;top:1px'>3#</span>办公楼设计变更</span></div>
<div class='cell' style='left:492px;top:527px;width:52px'><span style='position:absolute;left:1px;top:1px'><span class='m' style='position:relative;top:1px'>JC13101</span></span></div>
<div class='cell' style='left:545px;top:527px;width:94px'><span style='position:absolute;left:1px;top:1px'>昆山迈致工厂机电</span></div>
<div class='cell' style='left:640px;top:527px;width:64px'><span style='position:absolute;left:1px;top:1px'>昆山迈致治具</span></div>
<div class='cell' style='left:705px;top:527px;width:82px'><span class='m' style='position:absolute;right:0;top:2px'>20,000.00</span></div>
<div class='cell' style='left:788px;top:527px;width:64px'><span class='m' style='position:absolute;right:0;top:2px'>20,000.00</span></div>
<div class='cell' style='left:853px;top:527px;width:90px'><span class='m' style='position:absolute;right:0;top:2px'>20,000.00</span></div>
<div class='cell' style='left:1088px;top:527px;width:57px'><span class='m' style='position:absolute;right:0;top:2px'>1,282,000.00</span></div>
<div class='cell' style='left:1276px;top:527px;width:64px'><span class='m' style='position:absolute;right:0;top:2px'>20,000.00</span></div>
<div class='cell' style='left:1341px;top:527px;width:6px'><span class='m' style='position:absolute;left:1px;top:2px'>2017</span></div>
<div class='cell' style='left:207px;top:550px;width:31px;text-align:center'><span class='m' style='position:relative;top:2px'>14</span></div>
<div class='cell' style='left:239px;top:550px;width:116px'><span style='position:absolute;left:60px;top:1px'><span class='m' style='position:relative;top:1px'>JC1401650111</span></span></div>
<div class='cell' style='left:356px;top:550px;width:135px'><span style='position:absolute;left:1px;top:1px'>铭城生活广场暖通<span class='m' style='position:relative;top:1px'>B1</span>层水系统</span></div>
<div class='cell' style='left:492px;top:550px;width:52px'><span style='position:absolute;left:1px;top:1px'><span class='m' style='position:relative;top:1px'>JC14701</span></span></div>
<div class='cell' style='left:545px;top:550px;width:94px'><span style='position:absolute;left:1px;top:1px'>铭城生活广场暖通</span></div>
<div class='cell' style='left:640px;top:550px;width:64px'><span style='position:absolute;left:1px;top:1px'>苏州资丰置业</span></div>
<div class='cell' style='left:705px;top:550px;width:82px'><span class='m' style='position:absolute;right:0;top:2px'>332,171.00</span></div>
<div class='cell' style='left:788px;top:550px;width:64px'><span class='m' style='position:absolute;right:0;top:2px'>332,171.00</span></div>
<div class='cell' style='left:853px;top:550px;width:90px'><span class='m' style='position:absolute;right:0;top:2px'>332,171.00</span></div>
<div class='cell' style='left:1276px;top:550px;width:64px'><span class='m' style='position:absolute;right:0;top:2px'>332,171.00</span></div>
<div class='cell' style='left:1341px;top:550px;width:6px'><span class='m' style='position:absolute;left:1px;top:2px'>2017</span></div>
<div class='cell' style='left:207px;top:573px;width:31px;text-align:center'><span class='m' style='position:relative;top:2px'>15</span></div>
<div class='cell' style='left:239px;top:573px;width:116px'><span style='position:absolute;left:60px;top:1px'><span class='m' style='position:relative;top:1px'>JC1321002011</span></span></div>
<div class='cell' style='left:356px;top:573px;width:135px'><span style='position:absolute;left:1px;top:1px'>固铂消防合同</span></div>
<div class='cell' style='left:492px;top:573px;width:52px'><span style='position:absolute;left:1px;top:1px'><span class='m' style='position:relative;top:1px'>JC13202</span></span></div>
<div class='cell' style='left:545px;top:573px;width:94px'><span style='position:absolute;left:1px;top:1px'>固铂（昆山）轮胎</span></div>
<div class='cell' style='left:640px;top:573px;width:64px'><span style='position:absolute;left:1px;top:1px'>固铂（昆山）</span></div>
<div class='cell' style='left:705px;top:573px;width:82px'><span class='m' style='position:absolute;right:0;top:2px'>700,000.00</span></div>
<div class='cell' style='left:788px;top:573px;width:64px'><span class='m' style='position:absolute;right:0;top:2px'>700,000.00</span></div>
<div class='cell' style='left:853px;top:573px;width:90px'><span class='m' style='position:absolute;right:0;top:2px'>700,000.00</span></div>
<div class='cell' style='left:1088px;top:573px;width:57px'><span class='m' style='position:absolute;right:0;top:2px'>1,358,542.00</span></div>
<div class='cell' style='left:1146px;top:573px;width:64px'><span class='m' style='position:absolute;right:0;top:2px'>358,542.00</span></div>
<div class='cell' style='left:1211px;top:573px;width:64px'><span class='m' style='position:absolute;right:0;top:2px'>-358,542.00</span></div>
<div class='cell' style='left:1276px;top:573px;width:64px'><span class='m' style='position:absolute;right:0;top:2px'>341,458.00</span></div>
<div class='cell' style='left:1341px;top:573px;width:6px'><span class='m' style='position:absolute;left:1px;top:2px'>2017</span></div>
<div class='cell' style='left:207px;top:596px;width:31px;text-align:center'><span class='m' style='position:relative;top:2px'>16</span></div>
<div class='cell' style='left:239px;top:596px;width:116px'><span style='position:absolute;left:60px;top:1px'><span class='m' style='position:relative;top:1px'>JC1361006011</span></span></div>
<div class='cell' style='left:356px;top:596px;width:135px'><span style='position:absolute;left:1px;top:1px'>万福阁<span class='m' style='position:relative;top:1px'>B3</span>线槽灯、空压管道</span></div>
<div class='cell' style='left:492px;top:596px;width:52px'><span style='position:absolute;left:1px;top:1px'><span class='m' style='position:relative;top:1px'>JC13606-</span>工</span></div>
<div class='cell' style='left:545px;top:596px;width:94px'><span style='position:absolute;left:1px;top:1px'>工程维护事业部<span class='m' style='position:relative;top:1px'>-</span>工</span></div>
<div class='cell' style='left:640px;top:596px;width:64px'><span style='position:absolute;left:1px;top:1px'>万福阁家具</span></div>
<div class='cell' style='left:705px;top:596px;width:82px'><span class='m' style='position:absolute;right:0;top:2px'>23,500.00</span></div>
<div class='cell' style='left:788px;top:596px;width:64px'><span class='m' style='position:absolute;right:0;top:2px'>23,500.00</span></div>
<div class='cell' style='left:853px;top:596px;width:90px'><span class='m' style='position:absolute;right:0;top:2px'>23,500.00</span></div>
<div class='cell' style='left:1028px;top:596px;width:59px'><span class='m' style='position:absolute;right:0;top:2px'>23,500.00</span></div>
<div class='cell' style='left:1088px;top:596px;width:57px'><span class='m' style='position:absolute;right:0;top:2px'>23,500.00</span></div>
<div class='cell' style='left:1146px;top:596px;width:64px'><span class='m' style='position:absolute;right:0;top:2px'>23,500.00</span></div>
<div class='cell' style='left:1211px;top:596px;width:64px'><span class='m' style='position:absolute;right:0;top:2px'>-23,500.00</span></div>
<div class='cell' style='left:1341px;top:596px;width:6px'><span class='m' style='position:absolute;left:1px;top:2px'>2017</span></div>
<div class='cell' style='left:207px;top:619px;width:31px;text-align:center'><span class='m' style='position:relative;top:2px'>17</span></div>
<div class='cell' style='left:239px;top:619px;width:116px'><span style='position:absolute;left:60px;top:1px'><span class='m' style='position:relative;top:1px'>JC1361145011</span></span></div>
<div class='cell' style='left:356px;top:619px;width:135px'><span style='position:absolute;left:1px;top:1px'>空调、太阳能维修工程</span></div>
<div class='cell' style='left:492px;top:619px;width:52px'><span style='position:absolute;left:1px;top:1px'><span class='m' style='position:relative;top:1px'>JC13604-</span>工</span></div>
<div class='cell' style='left:545px;top:619px;width:94px'><span style='position:absolute;left:1px;top:1px'>工程维护事业部<span class='m' style='position:relative;top:1px'>-</span>工</span></div>
<div class='cell' style='left:640px;top:619px;width:64px'><span style='position:absolute;left:1px;top:1px'>昆山满祥机械</span></div>
<div class='cell' style='left:705px;top:619px;width:82px'><span class='m' style='position:absolute;right:0;top:2px'>12,000.00</span></div>
<div class='cell' style='left:788px;top:619px;width:64px'><span class='m' style='position:absolute;right:0;top:2px'>12,000.00</span></div>
<div class='cell' style='left:853px;top:619px;width:90px'><span class='m' style='position:absolute;right:0;top:2px'>12,000.00</span></div>
<div class='cell' style='left:1028px;top:619px;width:59px'><span class='m' style='position:absolute;right:0;top:2px'>12,000.00</span></div>
<div class='cell' style='left:1088px;top:619px;width:57px'><span class='m' style='position:absolute;right:0;top:2px'>12,000.00</span></div>
<div class='cell' style='left:1146px;top:619px;width:64px'><span class='m' style='position:absolute;right:0;top:2px'>12,000.00</span></div>
<div class='cell' style='left:1211px;top:619px;width:64px'><span class='m' style='position:absolute;right:0;top:2px'>-12,000.00</span></div>
<div class='cell' style='left:1341px;top:619px;width:6px'><span class='m' style='position:absolute;left:1px;top:2px'>2017</span></div>
<div class='cell' style='left:207px;top:642px;width:31px;text-align:center'><span class='m' style='position:relative;top:2px'>18</span></div>
<div class='cell' style='left:239px;top:642px;width:116px'><span style='position:absolute;left:60px;top:1px'><span class='m' style='position:relative;top:1px'>JC1451079011</span></span></div>
<div class='cell' style='left:356px;top:642px;width:135px'><span style='position:absolute;left:1px;top:1px'>三厂<span class='m' style='position:relative;top:1px'>1F/2F/3F FM</span>改造工程</span></div>
<div class='cell' style='left:492px;top:642px;width:52px'><span style='position:absolute;left:1px;top:1px'><span class='m' style='position:relative;top:1px'>JC14501</span></span></div>
<div class='cell' style='left:545px;top:642px;width:94px'><span style='position:absolute;left:1px;top:1px'>仁宝信息技术（昆山</span></div>
<div class='cell' style='left:640px;top:642px;width:64px'><span style='position:absolute;left:1px;top:1px'>仁宝电子科技</span></div>
<div class='cell' style='left:705px;top:642px;width:82px'><span class='m' style='position:absolute;right:0;top:2px'>4,279,000.00</span></div>
<div class='cell' style='left:788px;top:642px;width:64px'><span class='m' style='position:absolute;right:0;top:2px'>279,000.00</span></div>
<div class='cell' style='left:853px;top:642px;width:90px'><span class='m' style='position:absolute;right:0;top:2px'>4,279,000.00</span></div>
<div class='cell' style='left:1276px;top:642px;width:64px'><span class='m' style='position:absolute;right:0;top:2px'>279,000.00</span></div>
<div class='cell' style='left:1341px;top:642px;width:6px'><span class='m' style='position:absolute;left:1px;top:2px'>2017</span></div>
<div class='cell' style='left:207px;top:665px;width:31px;text-align:center'><span class='m' style='position:relative;top:2px'>19</span></div>
<div class='cell' style='left:239px;top:665px;width:116px'><span style='position:absolute;left:60px;top:1px'><span class='m' style='position:relative;top:1px'>JC1361152011</span></span></div>
<div class='cell' style='left:356px;top:665px;width:135px'><span style='position:absolute;left:1px;top:1px'>技术监督局空调更换工程</span></div>
<div class='cell' style='left:492px;top:665px;width:52px'><span style='position:absolute;left:1px;top:1px'><span class='m' style='position:relative;top:1px'>JC13612-</span>工</span></div>
<div class='cell' style='left:545px;top:665px;width:94px'><span style='position:absolute;left:1px;top:1px'>工程维护事业部<span class='m' style='position:relative;top:1px'>-</span>工</span></div>
<div class='cell' style='left:640px;top:665px;width:64px'><span style='position:absolute;left:1px;top:1px'>昆山质量技术</span></div>
<div class='cell' style='left:705px;top:665px;width:82px'><span class='m' style='position:absolute;right:0;top:2px'>7,590.00</span></div>
<div class='cell' style='left:788px;top:665px;width:64px'><span class='m' style='position:absolute;right:0;top:2px'>7,590.00</span></div>
<div class='cell' style='left:853px;top:665px;width:90px'><span class='m' style='position:absolute;right:0;top:2px'>7,590.00</span></div>
<div class='cell' style='left:1276px;top:665px;width:64px'><span class='m' style='position:absolute;right:0;top:2px'>7,590.00</span></div>
<div class='cell' style='left:1341px;top:665px;width:6px'><span class='m' style='position:absolute;left:1px;top:2px'>2017</span></div>
<div class='cell' style='left:207px;top:688px;width:31px;text-align:center'><span class='m' style='position:relative;top:2px'>20</span></div>
<div class='cell' style='left:239px;top:688px;width:116px'><span style='position:absolute;left:60px;top:1px'><span class='m' style='position:relative;top:1px'>JC1371011111</span></span></div>
<div class='cell' style='left:356px;top:688px;width:135px'><span style='position:absolute;left:1px;top:1px'>哈利盛东芝照明动力等配电</span></div>
<div class='cell' style='left:492px;top:688px;width:52px'><span style='position:absolute;left:1px;top:1px'><span class='m' style='position:relative;top:1px'>JC13714</span></span></div>
<div class='cell' style='left:545px;top:688px;width:94px'><span style='position:absolute;left:1px;top:1px'>哈利盛东芝组立室</span></div>
<div class='cell' style='left:640px;top:688px;width:64px'><span style='position:absolute;left:1px;top:1px'>日立工程建设</span></div>
<div class='cell' style='left:705px;top:688px;width:82px'><span class='m' style='position:absolute;right:0;top:2px'>215,000.00</span></div>
<div class='cell' style='left:788px;top:688px;width:64px'><span class='m' style='position:absolute;right:0;top:2px'>215,000.00</span></div>
<div class='cell' style='left:853px;top:688px;width:90px'><span class='m' style='position:absolute;right:0;top:2px'>215,000.00</span></div>
<div class='cell' style='left:1028px;top:688px;width:59px'><span class='m' style='position:absolute;right:0;top:2px'>215,000.00</span></div>
<div class='cell' style='left:1276px;top:688px;width:64px'><span class='m' style='position:absolute;right:0;top:2px'>215,000.00</span></div>
<div class='cell' style='left:1341px;top:688px;width:6px'><span class='m' style='position:absolute;left:1px;top:2px'>2017</span></div>
<div class='ab' style='left:1347px;top:164px;width:17px;height:545px;background:#f0f0f0'></div>
<svg class='ab' style='left:1351px;top:168px' width='9' height='9' viewBox='0 0 9 9'><path d='M1 6.5 L4.5 3 L8 6.5' fill='none' stroke='#555' stroke-width='2'/></svg>
<div class='ab' style='left:1348px;top:181px;width:15px;height:17px;background:#cdcdcd'></div>
<svg class='ab' style='left:1351px;top:694px' width='9' height='9' viewBox='0 0 9 9'><path d='M1 2.5 L4.5 6 L8 2.5' fill='none' stroke='#555' stroke-width='2'/></svg>
<div class='ab' style='left:207px;top:709px;width:1157px;height:15px;background:#f0f0f0'></div>
<svg class='ab' style='left:210px;top:712px' width='9' height='9' viewBox='0 0 9 9'><path d='M6.5 1 L3 4.5 L6.5 8' fill='none' stroke='#555' stroke-width='2'/></svg>
<div class='ab' style='left:224px;top:709px;width:17px;height:15px;background:#cdcdcd'></div>
<svg class='ab' style='left:1334px;top:712px' width='9' height='9' viewBox='0 0 9 9'><path d='M2.5 1 L6 4.5 L2.5 8' fill='none' stroke='#555' stroke-width='2'/></svg>
</body></html>
